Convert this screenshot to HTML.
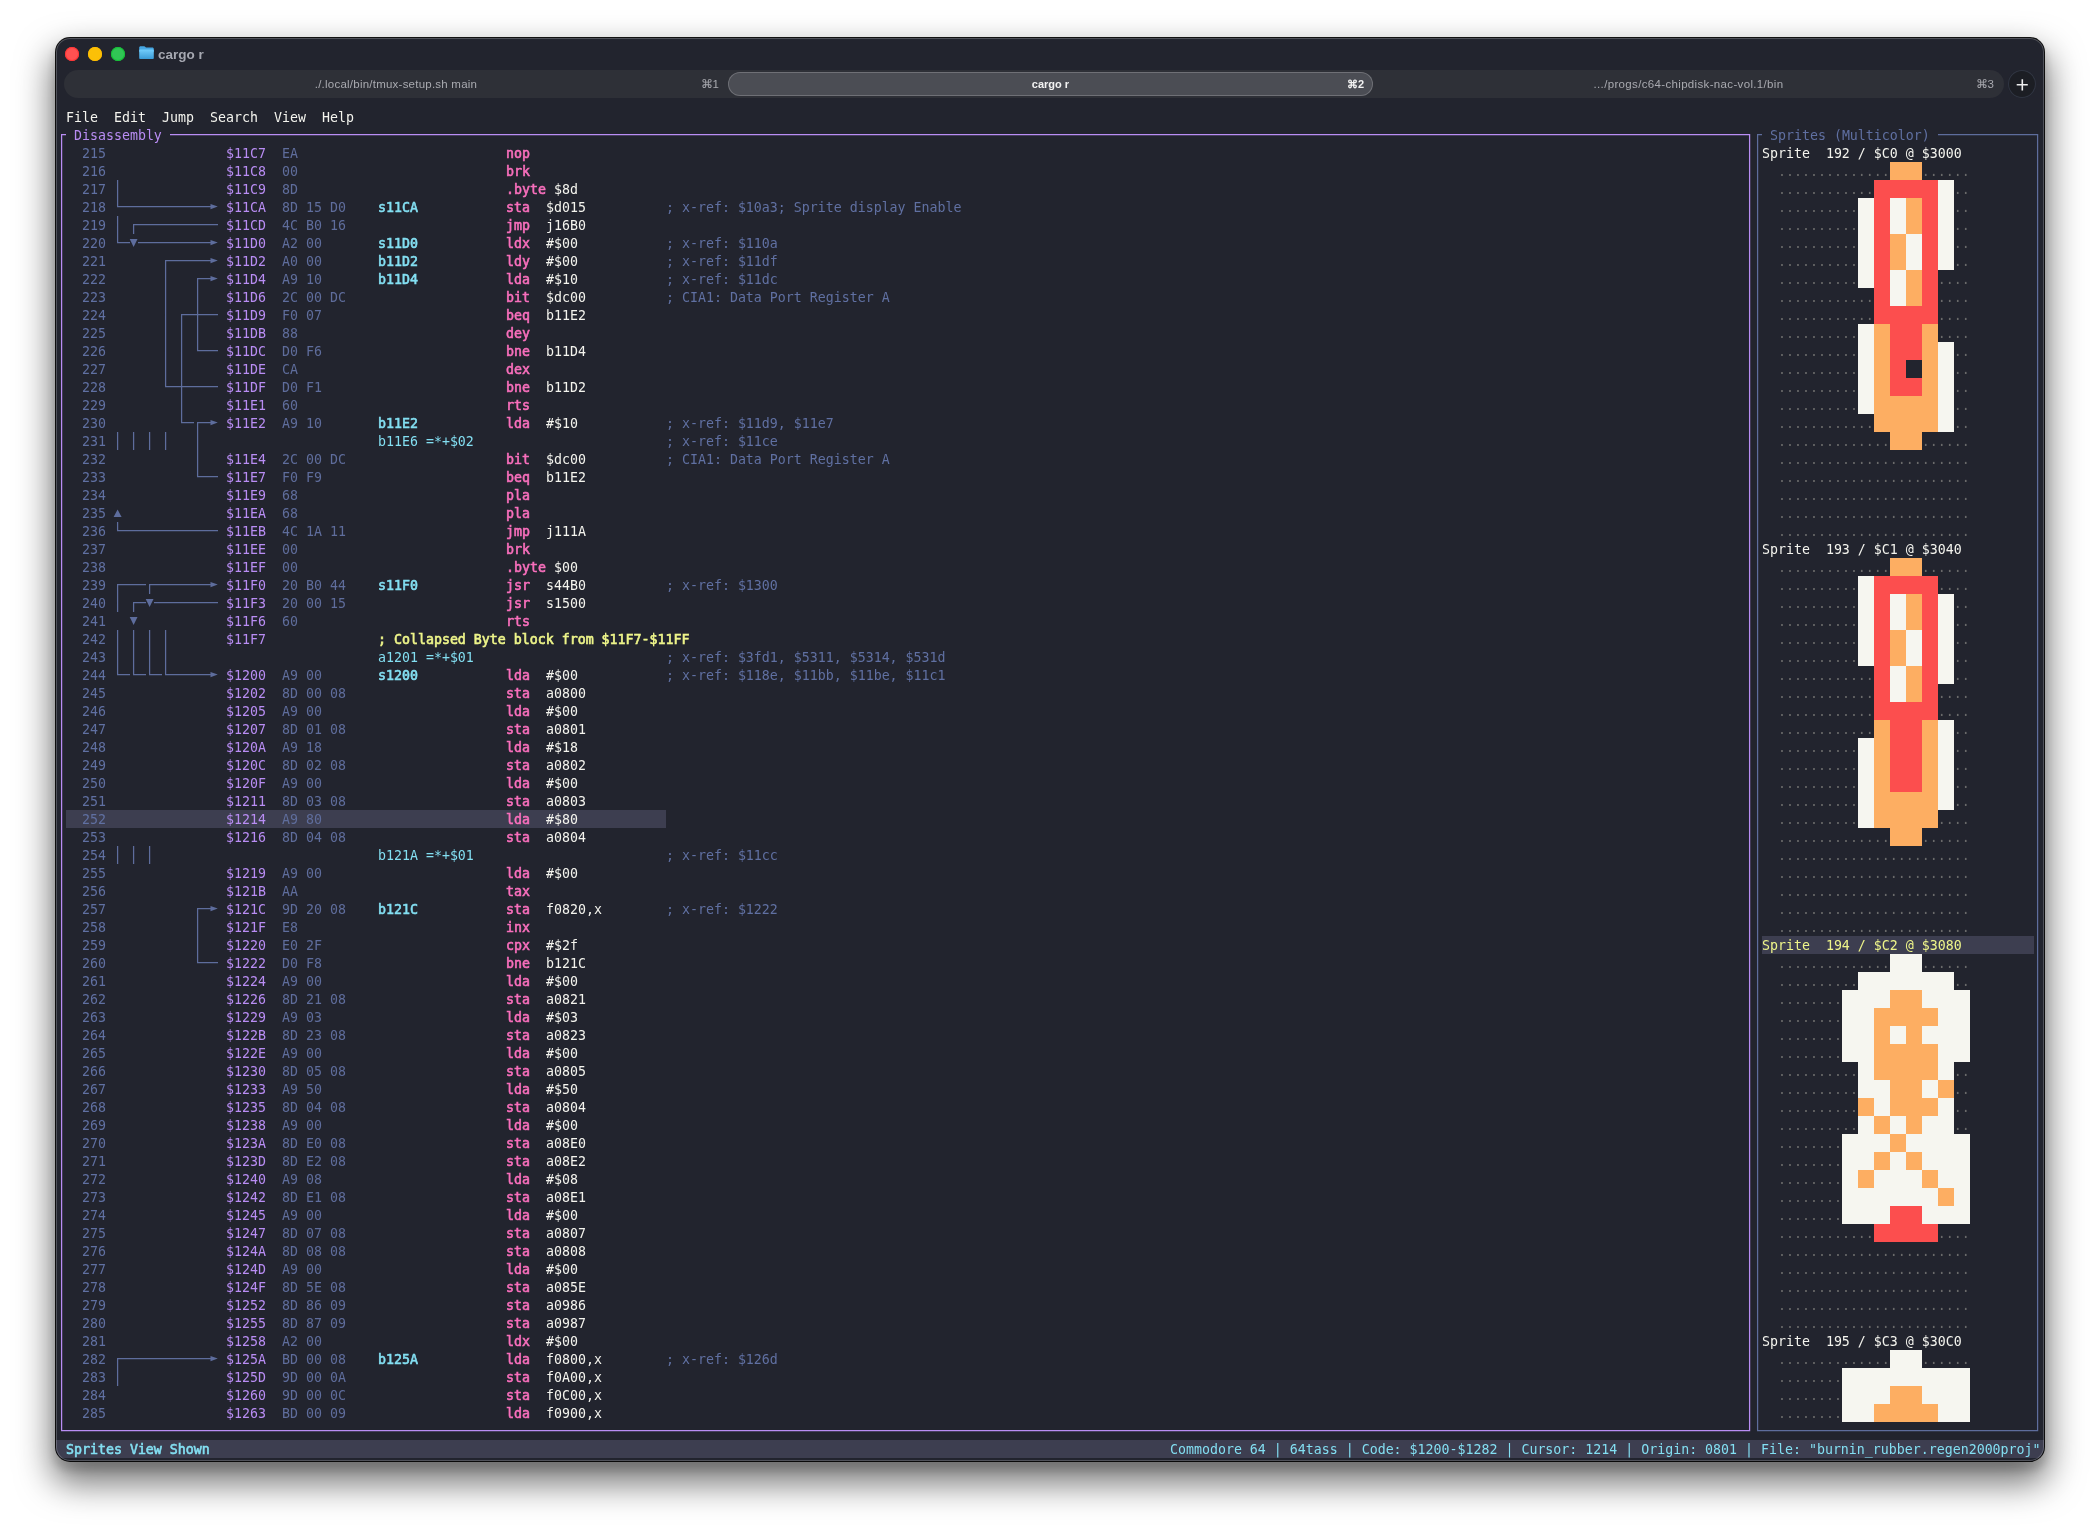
<!DOCTYPE html>
<html lang="en"><head><meta charset="utf-8"><title>cargo r</title>
<style>
html,body{margin:0;padding:0}
body{width:2100px;height:1535px;background:#fff;overflow:hidden;position:relative;font-family:"Liberation Sans",sans-serif}
.win{position:absolute;left:56px;top:38px;width:1988px;height:1423px;background:#22242e;border-radius:14px;
 box-shadow:0 0 0 1px rgba(0,0,0,.92),0 18px 35px 4px rgba(0,0,0,.55),0 7px 7px 3px rgba(0,0,0,.115);overflow:hidden}
.inner{position:absolute;inset:0;border-radius:14px;box-shadow:inset 0 0 0 1px rgba(255,255,255,.21);pointer-events:none;z-index:5}
.tl{position:absolute;top:9px;width:14px;height:14px;border-radius:50%}
.title{will-change:transform;position:absolute;left:102px;top:9px;height:16px;line-height:16px;font-size:13.5px;font-weight:bold;color:#a6a8b1;white-space:pre}
.tabs{will-change:transform;position:absolute;left:8px;top:32px;width:1939.5px;height:28px;border-radius:14px;background:#2e3037}
.tab{position:absolute;top:0;height:28px;line-height:28px;font-size:11.5px;letter-spacing:.2px;color:#a9aab0;white-space:pre}
.tab.act{top:2px;height:24px;line-height:24px;border-radius:12px;background:#4b4d54;box-shadow:inset 0 0 0 1px rgba(255,255,255,.2);color:#f2f2f2;font-weight:bold;font-size:11px;letter-spacing:0}
.tab .t{position:absolute;left:0;right:0;text-align:center}
.tab .k{position:absolute;right:9px;letter-spacing:0}
.plus{position:absolute;left:1952px;top:32px;width:28px;height:28px;border-radius:50%;background:#1c1e24;box-shadow:inset 0 0 0 1px #303542}
.sb{position:absolute;left:0;top:1402px;width:1988px;height:18px;background:#3d3e50}
.ov{position:absolute;left:0;top:0}
.term{position:absolute;left:0;top:0;will-change:transform;font-family:"DejaVu Sans Mono", "Liberation Mono", monospace;font-size:13.288px;color:#f4f4ee}
.r{position:absolute;left:0;height:18px;line-height:18px;white-space:pre}
.r span{position:absolute;top:1px}
.n{width:40px;text-align:right;color:#6070a2}
.fg{color:#f4f4ee}.pu{color:#b98df4}.by{color:#5f6d9c}.cy{color:#83dff2}.pk{color:#f86fbc}.co{color:#6070a2}.ye{color:#eef58a}.dt{color:#6a6a6a}
.b{-webkit-text-stroke:.6px currentColor}
</style></head>
<body>
<div class="win">

<div class="tl" style="left:9px;background:#ff5151;box-shadow:inset 0 0 0 1px #ff3434"></div>
<div class="tl" style="left:32px;background:#fbc007;box-shadow:inset 0 0 0 1px #ffbd00"></div>
<div class="tl" style="left:55px;background:#31c555;box-shadow:inset 0 0 0 1px #14c136"></div>
<svg style="position:absolute;left:82.6px;top:8.2px" width="15" height="13.4" viewBox="0 0 15 13.4"><defs><linearGradient id="fg" x1="0" y1="0" x2="0" y2="1"><stop offset="0" stop-color="#72cdfc"/><stop offset="1" stop-color="#3a9bd7"/></linearGradient></defs><path d="M.2 1.6C.2 .8 .8 .2 1.6 .2H5.1C5.7 .2 6 .5 6.4 .9L7 1.6H13.4C14.2 1.6 14.8 2.2 14.8 3V6H.2Z" fill="#46a6e2"/><path d="M.2 4.6C.2 4 .7 3.6 1.2 3.6H13.8C14.4 3.6 14.8 4 14.8 4.6V11.9C14.8 12.6 14.3 13.1 13.6 13.1H1.4C.7 13.1 .2 12.6 .2 11.9Z" fill="url(#fg)"/></svg>
<div class="title">cargo r</div>
<div class="tabs">
 <div class="tab" style="left:0;width:664px"><span class="t" style="letter-spacing:.23px">./.local/bin/tmux-setup.sh main</span><span class="k">⌘1</span></div>
 <div class="tab act" style="left:664px;width:645px"><span class="t">cargo r</span><span class="k">⌘2</span></div>
 <div class="tab" style="left:1309px;width:631px"><span class="t" style="letter-spacing:.34px">.../progs/c64-chipdisk-nac-vol.1/bin</span><span class="k" style="right:10px">⌘3</span></div>
</div>
<div class="plus"><svg width="28" height="28" viewBox="0 0 28 28"><path d="M14.3 9.2V20.4M8.7 14.7H19.8" stroke="#ededee" stroke-width="1.6" fill="none"/></svg></div>

<div class="sb"></div>
<svg class="ov" width="1988" height="1423" viewBox="0 0 1988 1423"><rect x="10" y="772" width="600" height="18" fill="#3d3e50"/><rect x="1834" y="124" width="32" height="18" fill="#fdae62"/><rect x="1818" y="142" width="64" height="18" fill="#fc4e4e"/><rect x="1882" y="142" width="16" height="18" fill="#f6f6f0"/><rect x="1802" y="160" width="16" height="18" fill="#f6f6f0"/><rect x="1818" y="160" width="16" height="18" fill="#fc4e4e"/><rect x="1834" y="160" width="16" height="18" fill="#f6f6f0"/><rect x="1850" y="160" width="16" height="18" fill="#fdae62"/><rect x="1866" y="160" width="16" height="18" fill="#fc4e4e"/><rect x="1882" y="160" width="16" height="18" fill="#f6f6f0"/><rect x="1802" y="178" width="16" height="18" fill="#f6f6f0"/><rect x="1818" y="178" width="16" height="18" fill="#fc4e4e"/><rect x="1834" y="178" width="16" height="18" fill="#f6f6f0"/><rect x="1850" y="178" width="16" height="18" fill="#fdae62"/><rect x="1866" y="178" width="16" height="18" fill="#fc4e4e"/><rect x="1882" y="178" width="16" height="18" fill="#f6f6f0"/><rect x="1802" y="196" width="16" height="18" fill="#f6f6f0"/><rect x="1818" y="196" width="16" height="18" fill="#fc4e4e"/><rect x="1834" y="196" width="16" height="18" fill="#fdae62"/><rect x="1850" y="196" width="16" height="18" fill="#f6f6f0"/><rect x="1866" y="196" width="16" height="18" fill="#fc4e4e"/><rect x="1882" y="196" width="16" height="18" fill="#f6f6f0"/><rect x="1802" y="214" width="16" height="18" fill="#f6f6f0"/><rect x="1818" y="214" width="16" height="18" fill="#fc4e4e"/><rect x="1834" y="214" width="16" height="18" fill="#fdae62"/><rect x="1850" y="214" width="16" height="18" fill="#f6f6f0"/><rect x="1866" y="214" width="16" height="18" fill="#fc4e4e"/><rect x="1882" y="214" width="16" height="18" fill="#f6f6f0"/><rect x="1802" y="232" width="16" height="18" fill="#f6f6f0"/><rect x="1818" y="232" width="16" height="18" fill="#fc4e4e"/><rect x="1834" y="232" width="16" height="18" fill="#f6f6f0"/><rect x="1850" y="232" width="16" height="18" fill="#fdae62"/><rect x="1866" y="232" width="16" height="18" fill="#fc4e4e"/><rect x="1818" y="250" width="16" height="18" fill="#fc4e4e"/><rect x="1834" y="250" width="16" height="18" fill="#f6f6f0"/><rect x="1850" y="250" width="16" height="18" fill="#fdae62"/><rect x="1866" y="250" width="16" height="18" fill="#fc4e4e"/><rect x="1818" y="268" width="64" height="18" fill="#fc4e4e"/><rect x="1802" y="286" width="16" height="18" fill="#f6f6f0"/><rect x="1818" y="286" width="16" height="18" fill="#fdae62"/><rect x="1834" y="286" width="32" height="18" fill="#fc4e4e"/><rect x="1866" y="286" width="16" height="18" fill="#fdae62"/><rect x="1802" y="304" width="16" height="18" fill="#f6f6f0"/><rect x="1818" y="304" width="16" height="18" fill="#fdae62"/><rect x="1834" y="304" width="32" height="18" fill="#fc4e4e"/><rect x="1866" y="304" width="16" height="18" fill="#fdae62"/><rect x="1882" y="304" width="16" height="18" fill="#f6f6f0"/><rect x="1802" y="322" width="16" height="18" fill="#f6f6f0"/><rect x="1818" y="322" width="16" height="18" fill="#fdae62"/><rect x="1834" y="322" width="16" height="18" fill="#fc4e4e"/><rect x="1866" y="322" width="16" height="18" fill="#fdae62"/><rect x="1882" y="322" width="16" height="18" fill="#f6f6f0"/><rect x="1802" y="340" width="16" height="18" fill="#f6f6f0"/><rect x="1818" y="340" width="16" height="18" fill="#fdae62"/><rect x="1834" y="340" width="32" height="18" fill="#fc4e4e"/><rect x="1866" y="340" width="16" height="18" fill="#fdae62"/><rect x="1882" y="340" width="16" height="18" fill="#f6f6f0"/><rect x="1802" y="358" width="16" height="18" fill="#f6f6f0"/><rect x="1818" y="358" width="64" height="18" fill="#fdae62"/><rect x="1882" y="358" width="16" height="18" fill="#f6f6f0"/><rect x="1818" y="376" width="64" height="18" fill="#fdae62"/><rect x="1882" y="376" width="16" height="18" fill="#f6f6f0"/><rect x="1834" y="394" width="32" height="18" fill="#fdae62"/><rect x="1834" y="520" width="32" height="18" fill="#fdae62"/><rect x="1802" y="538" width="16" height="18" fill="#f6f6f0"/><rect x="1818" y="538" width="64" height="18" fill="#fc4e4e"/><rect x="1802" y="556" width="16" height="18" fill="#f6f6f0"/><rect x="1818" y="556" width="16" height="18" fill="#fc4e4e"/><rect x="1834" y="556" width="16" height="18" fill="#f6f6f0"/><rect x="1850" y="556" width="16" height="18" fill="#fdae62"/><rect x="1866" y="556" width="16" height="18" fill="#fc4e4e"/><rect x="1882" y="556" width="16" height="18" fill="#f6f6f0"/><rect x="1802" y="574" width="16" height="18" fill="#f6f6f0"/><rect x="1818" y="574" width="16" height="18" fill="#fc4e4e"/><rect x="1834" y="574" width="16" height="18" fill="#f6f6f0"/><rect x="1850" y="574" width="16" height="18" fill="#fdae62"/><rect x="1866" y="574" width="16" height="18" fill="#fc4e4e"/><rect x="1882" y="574" width="16" height="18" fill="#f6f6f0"/><rect x="1802" y="592" width="16" height="18" fill="#f6f6f0"/><rect x="1818" y="592" width="16" height="18" fill="#fc4e4e"/><rect x="1834" y="592" width="16" height="18" fill="#fdae62"/><rect x="1850" y="592" width="16" height="18" fill="#f6f6f0"/><rect x="1866" y="592" width="16" height="18" fill="#fc4e4e"/><rect x="1882" y="592" width="16" height="18" fill="#f6f6f0"/><rect x="1802" y="610" width="16" height="18" fill="#f6f6f0"/><rect x="1818" y="610" width="16" height="18" fill="#fc4e4e"/><rect x="1834" y="610" width="16" height="18" fill="#fdae62"/><rect x="1850" y="610" width="16" height="18" fill="#f6f6f0"/><rect x="1866" y="610" width="16" height="18" fill="#fc4e4e"/><rect x="1882" y="610" width="16" height="18" fill="#f6f6f0"/><rect x="1818" y="628" width="16" height="18" fill="#fc4e4e"/><rect x="1834" y="628" width="16" height="18" fill="#f6f6f0"/><rect x="1850" y="628" width="16" height="18" fill="#fdae62"/><rect x="1866" y="628" width="16" height="18" fill="#fc4e4e"/><rect x="1882" y="628" width="16" height="18" fill="#f6f6f0"/><rect x="1818" y="646" width="16" height="18" fill="#fc4e4e"/><rect x="1834" y="646" width="16" height="18" fill="#f6f6f0"/><rect x="1850" y="646" width="16" height="18" fill="#fdae62"/><rect x="1866" y="646" width="16" height="18" fill="#fc4e4e"/><rect x="1818" y="664" width="64" height="18" fill="#fc4e4e"/><rect x="1818" y="682" width="16" height="18" fill="#fdae62"/><rect x="1834" y="682" width="32" height="18" fill="#fc4e4e"/><rect x="1866" y="682" width="16" height="18" fill="#fdae62"/><rect x="1882" y="682" width="16" height="18" fill="#f6f6f0"/><rect x="1802" y="700" width="16" height="18" fill="#f6f6f0"/><rect x="1818" y="700" width="16" height="18" fill="#fdae62"/><rect x="1834" y="700" width="32" height="18" fill="#fc4e4e"/><rect x="1866" y="700" width="16" height="18" fill="#fdae62"/><rect x="1882" y="700" width="16" height="18" fill="#f6f6f0"/><rect x="1802" y="718" width="16" height="18" fill="#f6f6f0"/><rect x="1818" y="718" width="16" height="18" fill="#fdae62"/><rect x="1834" y="718" width="32" height="18" fill="#fc4e4e"/><rect x="1866" y="718" width="16" height="18" fill="#fdae62"/><rect x="1882" y="718" width="16" height="18" fill="#f6f6f0"/><rect x="1802" y="736" width="16" height="18" fill="#f6f6f0"/><rect x="1818" y="736" width="16" height="18" fill="#fdae62"/><rect x="1834" y="736" width="32" height="18" fill="#fc4e4e"/><rect x="1866" y="736" width="16" height="18" fill="#fdae62"/><rect x="1882" y="736" width="16" height="18" fill="#f6f6f0"/><rect x="1802" y="754" width="16" height="18" fill="#f6f6f0"/><rect x="1818" y="754" width="64" height="18" fill="#fdae62"/><rect x="1882" y="754" width="16" height="18" fill="#f6f6f0"/><rect x="1802" y="772" width="16" height="18" fill="#f6f6f0"/><rect x="1818" y="772" width="64" height="18" fill="#fdae62"/><rect x="1834" y="790" width="32" height="18" fill="#fdae62"/><rect x="1706" y="898" width="272" height="18" fill="#3d3e50"/><rect x="1834" y="916" width="32" height="18" fill="#f6f6f0"/><rect x="1802" y="934" width="96" height="18" fill="#f6f6f0"/><rect x="1786" y="952" width="48" height="18" fill="#f6f6f0"/><rect x="1834" y="952" width="32" height="18" fill="#fdae62"/><rect x="1866" y="952" width="48" height="18" fill="#f6f6f0"/><rect x="1786" y="970" width="32" height="18" fill="#f6f6f0"/><rect x="1818" y="970" width="64" height="18" fill="#fdae62"/><rect x="1882" y="970" width="32" height="18" fill="#f6f6f0"/><rect x="1786" y="988" width="32" height="18" fill="#f6f6f0"/><rect x="1818" y="988" width="16" height="18" fill="#fdae62"/><rect x="1834" y="988" width="16" height="18" fill="#f6f6f0"/><rect x="1850" y="988" width="16" height="18" fill="#fdae62"/><rect x="1866" y="988" width="48" height="18" fill="#f6f6f0"/><rect x="1786" y="1006" width="32" height="18" fill="#f6f6f0"/><rect x="1818" y="1006" width="64" height="18" fill="#fdae62"/><rect x="1882" y="1006" width="32" height="18" fill="#f6f6f0"/><rect x="1802" y="1024" width="16" height="18" fill="#f6f6f0"/><rect x="1818" y="1024" width="64" height="18" fill="#fdae62"/><rect x="1882" y="1024" width="16" height="18" fill="#f6f6f0"/><rect x="1802" y="1042" width="32" height="18" fill="#f6f6f0"/><rect x="1834" y="1042" width="32" height="18" fill="#fdae62"/><rect x="1866" y="1042" width="16" height="18" fill="#f6f6f0"/><rect x="1882" y="1042" width="16" height="18" fill="#fdae62"/><rect x="1802" y="1060" width="16" height="18" fill="#fdae62"/><rect x="1818" y="1060" width="16" height="18" fill="#f6f6f0"/><rect x="1834" y="1060" width="48" height="18" fill="#fdae62"/><rect x="1882" y="1060" width="16" height="18" fill="#f6f6f0"/><rect x="1802" y="1078" width="16" height="18" fill="#f6f6f0"/><rect x="1818" y="1078" width="16" height="18" fill="#fdae62"/><rect x="1834" y="1078" width="16" height="18" fill="#f6f6f0"/><rect x="1850" y="1078" width="16" height="18" fill="#fdae62"/><rect x="1866" y="1078" width="32" height="18" fill="#f6f6f0"/><rect x="1786" y="1096" width="48" height="18" fill="#f6f6f0"/><rect x="1834" y="1096" width="16" height="18" fill="#fdae62"/><rect x="1850" y="1096" width="64" height="18" fill="#f6f6f0"/><rect x="1786" y="1114" width="32" height="18" fill="#f6f6f0"/><rect x="1818" y="1114" width="16" height="18" fill="#fdae62"/><rect x="1834" y="1114" width="16" height="18" fill="#f6f6f0"/><rect x="1850" y="1114" width="16" height="18" fill="#fdae62"/><rect x="1866" y="1114" width="48" height="18" fill="#f6f6f0"/><rect x="1786" y="1132" width="16" height="18" fill="#f6f6f0"/><rect x="1802" y="1132" width="16" height="18" fill="#fdae62"/><rect x="1818" y="1132" width="48" height="18" fill="#f6f6f0"/><rect x="1866" y="1132" width="16" height="18" fill="#fdae62"/><rect x="1882" y="1132" width="32" height="18" fill="#f6f6f0"/><rect x="1786" y="1150" width="96" height="18" fill="#f6f6f0"/><rect x="1882" y="1150" width="16" height="18" fill="#fdae62"/><rect x="1898" y="1150" width="16" height="18" fill="#f6f6f0"/><rect x="1786" y="1168" width="48" height="18" fill="#f6f6f0"/><rect x="1834" y="1168" width="32" height="18" fill="#fc4e4e"/><rect x="1866" y="1168" width="48" height="18" fill="#f6f6f0"/><rect x="1818" y="1186" width="64" height="18" fill="#fc4e4e"/><rect x="1834" y="1312" width="32" height="18" fill="#f6f6f0"/><rect x="1786" y="1330" width="128" height="18" fill="#f6f6f0"/><rect x="1786" y="1348" width="48" height="18" fill="#f6f6f0"/><rect x="1834" y="1348" width="32" height="18" fill="#fdae62"/><rect x="1866" y="1348" width="48" height="18" fill="#f6f6f0"/><rect x="1786" y="1366" width="32" height="18" fill="#f6f6f0"/><rect x="1818" y="1366" width="64" height="18" fill="#fdae62"/><rect x="1882" y="1366" width="32" height="18" fill="#f6f6f0"/><path d="M5.6 106V96.6H10M114 96.6H1690M1690 96.6H1693.6V106M5.6 106V1384M1693.6 106V1384M5.6 1384V1392.6H10M1690 1392.6H1693.6V1384M10 1392.6H1690" fill="none" stroke="#b98df4" stroke-width="1.25"/><path d="M1701.6 106V96.6H1706M1882 96.6H1978M1978 96.6H1981.6V106M1701.6 106V1384M1981.6 106V1384M1701.6 1384V1392.6H1706M1978 1392.6H1981.6V1384M1706 1392.6H1978" fill="none" stroke="#5e6d9d" stroke-width="1.25"/><path d="M61.6 142V160M61.6 160V168.6H66M66 168.6H74M74 168.6H82M82 168.6H90M90 168.6H98M98 168.6H106M106 168.6H114M114 168.6H122M122 168.6H130M130 168.6H138M138 168.6H146M146 168.6H154M154 168.6H157M61.6 178V196M77.6 196V186.6H82M82 186.6H90M90 186.6H98M98 186.6H106M106 186.6H114M114 186.6H122M122 186.6H130M130 186.6H138M138 186.6H146M146 186.6H154M154 186.6H162M61.6 196V204.6H66M66 204.6H74M82 204.6H90M90 204.6H98M98 204.6H106M106 204.6H114M114 204.6H122M122 204.6H130M130 204.6H138M138 204.6H146M146 204.6H154M154 204.6H157M109.6 232V222.6H114M114 222.6H122M122 222.6H130M130 222.6H138M138 222.6H146M146 222.6H154M154 222.6H157M109.6 232V250M141.6 250V240.6H146M146 240.6H154M154 240.6H157M109.6 250V268M141.6 250V268M109.6 268V286M125.6 286V276.6H130M130 276.6H138M141.6 268V286M138 276.6H146M146 276.6H154M154 276.6H162M109.6 286V304M125.6 286V304M141.6 286V304M109.6 304V322M125.6 304V322M141.6 304V312.6H146M146 312.6H154M154 312.6H162M109.6 322V340M125.6 322V340M109.6 340V348.6H114M114 348.6H122M125.6 340V358M122 348.6H130M130 348.6H138M138 348.6H146M146 348.6H154M154 348.6H162M125.6 358V376M125.6 376V384.6H130M130 384.6H138M141.6 394V384.6H146M146 384.6H154M154 384.6H157M61.6 394V412M77.6 394V412M93.6 394V412M109.6 394V412M141.6 394V412M141.6 412V430M141.6 430V438.6H146M146 438.6H154M154 438.6H162M61.6 484V492.6H66M66 492.6H74M74 492.6H82M82 492.6H90M90 492.6H98M98 492.6H106M106 492.6H114M114 492.6H122M122 492.6H130M130 492.6H138M138 492.6H146M146 492.6H154M154 492.6H162M61.6 556V546.6H66M66 546.6H74M74 546.6H82M82 546.6H90M93.6 556V546.6H98M98 546.6H106M106 546.6H114M114 546.6H122M122 546.6H130M130 546.6H138M138 546.6H146M146 546.6H154M154 546.6H157M61.6 556V574M77.6 574V564.6H82M82 564.6H90M98 564.6H106M106 564.6H114M114 564.6H122M122 564.6H130M130 564.6H138M138 564.6H146M146 564.6H154M154 564.6H162M61.6 592V610M77.6 592V610M93.6 592V610M109.6 592V610M61.6 610V628M77.6 610V628M93.6 610V628M109.6 610V628M61.6 628V636.6H66M66 636.6H74M77.6 628V636.6H82M82 636.6H90M93.6 628V636.6H98M98 636.6H106M109.6 628V636.6H114M114 636.6H122M122 636.6H130M130 636.6H138M138 636.6H146M146 636.6H154M154 636.6H157M61.6 808V826M77.6 808V826M93.6 808V826M141.6 880V870.6H146M146 870.6H154M154 870.6H157M141.6 880V898M141.6 898V916M141.6 916V924.6H146M146 924.6H154M154 924.6H162M61.6 1330V1320.6H66M66 1320.6H74M74 1320.6H82M82 1320.6H90M90 1320.6H98M98 1320.6H106M106 1320.6H114M114 1320.6H122M122 1320.6H130M130 1320.6H138M138 1320.6H146M146 1320.6H154M154 1320.6H157M61.6 1330V1348" fill="none" stroke="#5e6d9d" stroke-width="1.25"/><path d="M154.5 166.0L161.8 168.6L154.5 171.2ZM73.69999999999999 201H81.5L77.6 209ZM154.5 202.0L161.8 204.6L154.5 207.2ZM154.5 220.0L161.8 222.6L154.5 225.2ZM154.5 238.0L161.8 240.6L154.5 243.2ZM154.5 382.0L161.8 384.6L154.5 387.20000000000005ZM57.6 479H65.6L61.6 471.5ZM154.5 544.0L161.8 546.6L154.5 549.2ZM89.69999999999999 561H97.5L93.6 569ZM73.69999999999999 579H81.5L77.6 587ZM154.5 634.0L161.8 636.6L154.5 639.2ZM154.5 868.0L161.8 870.6L154.5 873.2ZM154.5 1318.0L161.8 1320.6L154.5 1323.1999999999998Z" fill="#5e6d9d"/></svg>
<div class="term">
<div class="r" style="top:70px"><span class="fg" style="left:10px">File</span><span class="fg" style="left:58px">Edit</span><span class="fg" style="left:106px">Jump</span><span class="fg" style="left:154px">Search</span><span class="fg" style="left:218px">View</span><span class="fg" style="left:266px">Help</span></div>
<div class="r" style="top:88px"><span class="pu" style="left:18px">Disassembly</span><span class="co" style="left:1714px">Sprites (Multicolor)</span></div>
<div class="r" style="top:106px"><span class="n" style="left:10px">215</span><span class="pu" style="left:170px">$11C7</span><span class="by" style="left:226px">EA</span><span class="pk b" style="left:450px">nop</span></div>
<div class="r" style="top:124px"><span class="n" style="left:10px">216</span><span class="pu" style="left:170px">$11C8</span><span class="by" style="left:226px">00</span><span class="pk b" style="left:450px">brk</span></div>
<div class="r" style="top:142px"><span class="n" style="left:10px">217</span><span class="pu" style="left:170px">$11C9</span><span class="by" style="left:226px">8D</span><span class="pk b" style="left:450px">.byte</span><span class="fg" style="left:498px">$8d</span></div>
<div class="r" style="top:160px"><span class="n" style="left:10px">218</span><span class="pu" style="left:170px">$11CA</span><span class="by" style="left:226px">8D 15 D0</span><span class="cy b" style="left:322px">s11CA</span><span class="pk b" style="left:450px">sta</span><span class="fg" style="left:490px">$d015</span><span class="co" style="left:610px">; x-ref: $10a3; Sprite display Enable</span></div>
<div class="r" style="top:178px"><span class="n" style="left:10px">219</span><span class="pu" style="left:170px">$11CD</span><span class="by" style="left:226px">4C B0 16</span><span class="pk b" style="left:450px">jmp</span><span class="fg" style="left:490px">j16B0</span></div>
<div class="r" style="top:196px"><span class="n" style="left:10px">220</span><span class="pu" style="left:170px">$11D0</span><span class="by" style="left:226px">A2 00</span><span class="cy b" style="left:322px">s11D0</span><span class="pk b" style="left:450px">ldx</span><span class="fg" style="left:490px">#$00</span><span class="co" style="left:610px">; x-ref: $110a</span></div>
<div class="r" style="top:214px"><span class="n" style="left:10px">221</span><span class="pu" style="left:170px">$11D2</span><span class="by" style="left:226px">A0 00</span><span class="cy b" style="left:322px">b11D2</span><span class="pk b" style="left:450px">ldy</span><span class="fg" style="left:490px">#$00</span><span class="co" style="left:610px">; x-ref: $11df</span></div>
<div class="r" style="top:232px"><span class="n" style="left:10px">222</span><span class="pu" style="left:170px">$11D4</span><span class="by" style="left:226px">A9 10</span><span class="cy b" style="left:322px">b11D4</span><span class="pk b" style="left:450px">lda</span><span class="fg" style="left:490px">#$10</span><span class="co" style="left:610px">; x-ref: $11dc</span></div>
<div class="r" style="top:250px"><span class="n" style="left:10px">223</span><span class="pu" style="left:170px">$11D6</span><span class="by" style="left:226px">2C 00 DC</span><span class="pk b" style="left:450px">bit</span><span class="fg" style="left:490px">$dc00</span><span class="co" style="left:610px">; CIA1: Data Port Register A</span></div>
<div class="r" style="top:268px"><span class="n" style="left:10px">224</span><span class="pu" style="left:170px">$11D9</span><span class="by" style="left:226px">F0 07</span><span class="pk b" style="left:450px">beq</span><span class="fg" style="left:490px">b11E2</span></div>
<div class="r" style="top:286px"><span class="n" style="left:10px">225</span><span class="pu" style="left:170px">$11DB</span><span class="by" style="left:226px">88</span><span class="pk b" style="left:450px">dey</span></div>
<div class="r" style="top:304px"><span class="n" style="left:10px">226</span><span class="pu" style="left:170px">$11DC</span><span class="by" style="left:226px">D0 F6</span><span class="pk b" style="left:450px">bne</span><span class="fg" style="left:490px">b11D4</span></div>
<div class="r" style="top:322px"><span class="n" style="left:10px">227</span><span class="pu" style="left:170px">$11DE</span><span class="by" style="left:226px">CA</span><span class="pk b" style="left:450px">dex</span></div>
<div class="r" style="top:340px"><span class="n" style="left:10px">228</span><span class="pu" style="left:170px">$11DF</span><span class="by" style="left:226px">D0 F1</span><span class="pk b" style="left:450px">bne</span><span class="fg" style="left:490px">b11D2</span></div>
<div class="r" style="top:358px"><span class="n" style="left:10px">229</span><span class="pu" style="left:170px">$11E1</span><span class="by" style="left:226px">60</span><span class="pk b" style="left:450px">rts</span></div>
<div class="r" style="top:376px"><span class="n" style="left:10px">230</span><span class="pu" style="left:170px">$11E2</span><span class="by" style="left:226px">A9 10</span><span class="cy b" style="left:322px">b11E2</span><span class="pk b" style="left:450px">lda</span><span class="fg" style="left:490px">#$10</span><span class="co" style="left:610px">; x-ref: $11d9, $11e7</span></div>
<div class="r" style="top:394px"><span class="n" style="left:10px">231</span><span class="cy" style="left:322px">b11E6 =*+$02</span><span class="co" style="left:610px">; x-ref: $11ce</span></div>
<div class="r" style="top:412px"><span class="n" style="left:10px">232</span><span class="pu" style="left:170px">$11E4</span><span class="by" style="left:226px">2C 00 DC</span><span class="pk b" style="left:450px">bit</span><span class="fg" style="left:490px">$dc00</span><span class="co" style="left:610px">; CIA1: Data Port Register A</span></div>
<div class="r" style="top:430px"><span class="n" style="left:10px">233</span><span class="pu" style="left:170px">$11E7</span><span class="by" style="left:226px">F0 F9</span><span class="pk b" style="left:450px">beq</span><span class="fg" style="left:490px">b11E2</span></div>
<div class="r" style="top:448px"><span class="n" style="left:10px">234</span><span class="pu" style="left:170px">$11E9</span><span class="by" style="left:226px">68</span><span class="pk b" style="left:450px">pla</span></div>
<div class="r" style="top:466px"><span class="n" style="left:10px">235</span><span class="pu" style="left:170px">$11EA</span><span class="by" style="left:226px">68</span><span class="pk b" style="left:450px">pla</span></div>
<div class="r" style="top:484px"><span class="n" style="left:10px">236</span><span class="pu" style="left:170px">$11EB</span><span class="by" style="left:226px">4C 1A 11</span><span class="pk b" style="left:450px">jmp</span><span class="fg" style="left:490px">j111A</span></div>
<div class="r" style="top:502px"><span class="n" style="left:10px">237</span><span class="pu" style="left:170px">$11EE</span><span class="by" style="left:226px">00</span><span class="pk b" style="left:450px">brk</span></div>
<div class="r" style="top:520px"><span class="n" style="left:10px">238</span><span class="pu" style="left:170px">$11EF</span><span class="by" style="left:226px">00</span><span class="pk b" style="left:450px">.byte</span><span class="fg" style="left:498px">$00</span></div>
<div class="r" style="top:538px"><span class="n" style="left:10px">239</span><span class="pu" style="left:170px">$11F0</span><span class="by" style="left:226px">20 B0 44</span><span class="cy b" style="left:322px">s11F0</span><span class="pk b" style="left:450px">jsr</span><span class="fg" style="left:490px">s44B0</span><span class="co" style="left:610px">; x-ref: $1300</span></div>
<div class="r" style="top:556px"><span class="n" style="left:10px">240</span><span class="pu" style="left:170px">$11F3</span><span class="by" style="left:226px">20 00 15</span><span class="pk b" style="left:450px">jsr</span><span class="fg" style="left:490px">s1500</span></div>
<div class="r" style="top:574px"><span class="n" style="left:10px">241</span><span class="pu" style="left:170px">$11F6</span><span class="by" style="left:226px">60</span><span class="pk b" style="left:450px">rts</span></div>
<div class="r" style="top:592px"><span class="n" style="left:10px">242</span><span class="pu" style="left:170px">$11F7</span><span class="ye b" style="left:322px">; Collapsed Byte block from $11F7-$11FF</span></div>
<div class="r" style="top:610px"><span class="n" style="left:10px">243</span><span class="cy" style="left:322px">a1201 =*+$01</span><span class="co" style="left:610px">; x-ref: $3fd1, $5311, $5314, $531d</span></div>
<div class="r" style="top:628px"><span class="n" style="left:10px">244</span><span class="pu" style="left:170px">$1200</span><span class="by" style="left:226px">A9 00</span><span class="cy b" style="left:322px">s1200</span><span class="pk b" style="left:450px">lda</span><span class="fg" style="left:490px">#$00</span><span class="co" style="left:610px">; x-ref: $118e, $11bb, $11be, $11c1</span></div>
<div class="r" style="top:646px"><span class="n" style="left:10px">245</span><span class="pu" style="left:170px">$1202</span><span class="by" style="left:226px">8D 00 08</span><span class="pk b" style="left:450px">sta</span><span class="fg" style="left:490px">a0800</span></div>
<div class="r" style="top:664px"><span class="n" style="left:10px">246</span><span class="pu" style="left:170px">$1205</span><span class="by" style="left:226px">A9 00</span><span class="pk b" style="left:450px">lda</span><span class="fg" style="left:490px">#$00</span></div>
<div class="r" style="top:682px"><span class="n" style="left:10px">247</span><span class="pu" style="left:170px">$1207</span><span class="by" style="left:226px">8D 01 08</span><span class="pk b" style="left:450px">sta</span><span class="fg" style="left:490px">a0801</span></div>
<div class="r" style="top:700px"><span class="n" style="left:10px">248</span><span class="pu" style="left:170px">$120A</span><span class="by" style="left:226px">A9 18</span><span class="pk b" style="left:450px">lda</span><span class="fg" style="left:490px">#$18</span></div>
<div class="r" style="top:718px"><span class="n" style="left:10px">249</span><span class="pu" style="left:170px">$120C</span><span class="by" style="left:226px">8D 02 08</span><span class="pk b" style="left:450px">sta</span><span class="fg" style="left:490px">a0802</span></div>
<div class="r" style="top:736px"><span class="n" style="left:10px">250</span><span class="pu" style="left:170px">$120F</span><span class="by" style="left:226px">A9 00</span><span class="pk b" style="left:450px">lda</span><span class="fg" style="left:490px">#$00</span></div>
<div class="r" style="top:754px"><span class="n" style="left:10px">251</span><span class="pu" style="left:170px">$1211</span><span class="by" style="left:226px">8D 03 08</span><span class="pk b" style="left:450px">sta</span><span class="fg" style="left:490px">a0803</span></div>
<div class="r" style="top:772px"><span class="n" style="left:10px">252</span><span class="pu" style="left:170px">$1214</span><span class="by" style="left:226px">A9 80</span><span class="pk b" style="left:450px">lda</span><span class="fg" style="left:490px">#$80</span></div>
<div class="r" style="top:790px"><span class="n" style="left:10px">253</span><span class="pu" style="left:170px">$1216</span><span class="by" style="left:226px">8D 04 08</span><span class="pk b" style="left:450px">sta</span><span class="fg" style="left:490px">a0804</span></div>
<div class="r" style="top:808px"><span class="n" style="left:10px">254</span><span class="cy" style="left:322px">b121A =*+$01</span><span class="co" style="left:610px">; x-ref: $11cc</span></div>
<div class="r" style="top:826px"><span class="n" style="left:10px">255</span><span class="pu" style="left:170px">$1219</span><span class="by" style="left:226px">A9 00</span><span class="pk b" style="left:450px">lda</span><span class="fg" style="left:490px">#$00</span></div>
<div class="r" style="top:844px"><span class="n" style="left:10px">256</span><span class="pu" style="left:170px">$121B</span><span class="by" style="left:226px">AA</span><span class="pk b" style="left:450px">tax</span></div>
<div class="r" style="top:862px"><span class="n" style="left:10px">257</span><span class="pu" style="left:170px">$121C</span><span class="by" style="left:226px">9D 20 08</span><span class="cy b" style="left:322px">b121C</span><span class="pk b" style="left:450px">sta</span><span class="fg" style="left:490px">f0820,x</span><span class="co" style="left:610px">; x-ref: $1222</span></div>
<div class="r" style="top:880px"><span class="n" style="left:10px">258</span><span class="pu" style="left:170px">$121F</span><span class="by" style="left:226px">E8</span><span class="pk b" style="left:450px">inx</span></div>
<div class="r" style="top:898px"><span class="n" style="left:10px">259</span><span class="pu" style="left:170px">$1220</span><span class="by" style="left:226px">E0 2F</span><span class="pk b" style="left:450px">cpx</span><span class="fg" style="left:490px">#$2f</span></div>
<div class="r" style="top:916px"><span class="n" style="left:10px">260</span><span class="pu" style="left:170px">$1222</span><span class="by" style="left:226px">D0 F8</span><span class="pk b" style="left:450px">bne</span><span class="fg" style="left:490px">b121C</span></div>
<div class="r" style="top:934px"><span class="n" style="left:10px">261</span><span class="pu" style="left:170px">$1224</span><span class="by" style="left:226px">A9 00</span><span class="pk b" style="left:450px">lda</span><span class="fg" style="left:490px">#$00</span></div>
<div class="r" style="top:952px"><span class="n" style="left:10px">262</span><span class="pu" style="left:170px">$1226</span><span class="by" style="left:226px">8D 21 08</span><span class="pk b" style="left:450px">sta</span><span class="fg" style="left:490px">a0821</span></div>
<div class="r" style="top:970px"><span class="n" style="left:10px">263</span><span class="pu" style="left:170px">$1229</span><span class="by" style="left:226px">A9 03</span><span class="pk b" style="left:450px">lda</span><span class="fg" style="left:490px">#$03</span></div>
<div class="r" style="top:988px"><span class="n" style="left:10px">264</span><span class="pu" style="left:170px">$122B</span><span class="by" style="left:226px">8D 23 08</span><span class="pk b" style="left:450px">sta</span><span class="fg" style="left:490px">a0823</span></div>
<div class="r" style="top:1006px"><span class="n" style="left:10px">265</span><span class="pu" style="left:170px">$122E</span><span class="by" style="left:226px">A9 00</span><span class="pk b" style="left:450px">lda</span><span class="fg" style="left:490px">#$00</span></div>
<div class="r" style="top:1024px"><span class="n" style="left:10px">266</span><span class="pu" style="left:170px">$1230</span><span class="by" style="left:226px">8D 05 08</span><span class="pk b" style="left:450px">sta</span><span class="fg" style="left:490px">a0805</span></div>
<div class="r" style="top:1042px"><span class="n" style="left:10px">267</span><span class="pu" style="left:170px">$1233</span><span class="by" style="left:226px">A9 50</span><span class="pk b" style="left:450px">lda</span><span class="fg" style="left:490px">#$50</span></div>
<div class="r" style="top:1060px"><span class="n" style="left:10px">268</span><span class="pu" style="left:170px">$1235</span><span class="by" style="left:226px">8D 04 08</span><span class="pk b" style="left:450px">sta</span><span class="fg" style="left:490px">a0804</span></div>
<div class="r" style="top:1078px"><span class="n" style="left:10px">269</span><span class="pu" style="left:170px">$1238</span><span class="by" style="left:226px">A9 00</span><span class="pk b" style="left:450px">lda</span><span class="fg" style="left:490px">#$00</span></div>
<div class="r" style="top:1096px"><span class="n" style="left:10px">270</span><span class="pu" style="left:170px">$123A</span><span class="by" style="left:226px">8D E0 08</span><span class="pk b" style="left:450px">sta</span><span class="fg" style="left:490px">a08E0</span></div>
<div class="r" style="top:1114px"><span class="n" style="left:10px">271</span><span class="pu" style="left:170px">$123D</span><span class="by" style="left:226px">8D E2 08</span><span class="pk b" style="left:450px">sta</span><span class="fg" style="left:490px">a08E2</span></div>
<div class="r" style="top:1132px"><span class="n" style="left:10px">272</span><span class="pu" style="left:170px">$1240</span><span class="by" style="left:226px">A9 08</span><span class="pk b" style="left:450px">lda</span><span class="fg" style="left:490px">#$08</span></div>
<div class="r" style="top:1150px"><span class="n" style="left:10px">273</span><span class="pu" style="left:170px">$1242</span><span class="by" style="left:226px">8D E1 08</span><span class="pk b" style="left:450px">sta</span><span class="fg" style="left:490px">a08E1</span></div>
<div class="r" style="top:1168px"><span class="n" style="left:10px">274</span><span class="pu" style="left:170px">$1245</span><span class="by" style="left:226px">A9 00</span><span class="pk b" style="left:450px">lda</span><span class="fg" style="left:490px">#$00</span></div>
<div class="r" style="top:1186px"><span class="n" style="left:10px">275</span><span class="pu" style="left:170px">$1247</span><span class="by" style="left:226px">8D 07 08</span><span class="pk b" style="left:450px">sta</span><span class="fg" style="left:490px">a0807</span></div>
<div class="r" style="top:1204px"><span class="n" style="left:10px">276</span><span class="pu" style="left:170px">$124A</span><span class="by" style="left:226px">8D 08 08</span><span class="pk b" style="left:450px">sta</span><span class="fg" style="left:490px">a0808</span></div>
<div class="r" style="top:1222px"><span class="n" style="left:10px">277</span><span class="pu" style="left:170px">$124D</span><span class="by" style="left:226px">A9 00</span><span class="pk b" style="left:450px">lda</span><span class="fg" style="left:490px">#$00</span></div>
<div class="r" style="top:1240px"><span class="n" style="left:10px">278</span><span class="pu" style="left:170px">$124F</span><span class="by" style="left:226px">8D 5E 08</span><span class="pk b" style="left:450px">sta</span><span class="fg" style="left:490px">a085E</span></div>
<div class="r" style="top:1258px"><span class="n" style="left:10px">279</span><span class="pu" style="left:170px">$1252</span><span class="by" style="left:226px">8D 86 09</span><span class="pk b" style="left:450px">sta</span><span class="fg" style="left:490px">a0986</span></div>
<div class="r" style="top:1276px"><span class="n" style="left:10px">280</span><span class="pu" style="left:170px">$1255</span><span class="by" style="left:226px">8D 87 09</span><span class="pk b" style="left:450px">sta</span><span class="fg" style="left:490px">a0987</span></div>
<div class="r" style="top:1294px"><span class="n" style="left:10px">281</span><span class="pu" style="left:170px">$1258</span><span class="by" style="left:226px">A2 00</span><span class="pk b" style="left:450px">ldx</span><span class="fg" style="left:490px">#$00</span></div>
<div class="r" style="top:1312px"><span class="n" style="left:10px">282</span><span class="pu" style="left:170px">$125A</span><span class="by" style="left:226px">BD 00 08</span><span class="cy b" style="left:322px">b125A</span><span class="pk b" style="left:450px">lda</span><span class="fg" style="left:490px">f0800,x</span><span class="co" style="left:610px">; x-ref: $126d</span></div>
<div class="r" style="top:1330px"><span class="n" style="left:10px">283</span><span class="pu" style="left:170px">$125D</span><span class="by" style="left:226px">9D 00 0A</span><span class="pk b" style="left:450px">sta</span><span class="fg" style="left:490px">f0A00,x</span></div>
<div class="r" style="top:1348px"><span class="n" style="left:10px">284</span><span class="pu" style="left:170px">$1260</span><span class="by" style="left:226px">9D 00 0C</span><span class="pk b" style="left:450px">sta</span><span class="fg" style="left:490px">f0C00,x</span></div>
<div class="r" style="top:1366px"><span class="n" style="left:10px">285</span><span class="pu" style="left:170px">$1263</span><span class="by" style="left:226px">BD 00 09</span><span class="pk b" style="left:450px">lda</span><span class="fg" style="left:490px">f0900,x</span></div>
<div class="r" style="top:106px"><span class="fg" style="left:1706px">Sprite  192 / $C0 @ $3000</span></div>
<div class="r" style="top:124px"><span class="dt" style="left:1722px">..............    ......</span></div>
<div class="r" style="top:142px"><span class="dt" style="left:1722px">............          ..</span></div>
<div class="r" style="top:160px"><span class="dt" style="left:1722px">..........            ..</span></div>
<div class="r" style="top:178px"><span class="dt" style="left:1722px">..........            ..</span></div>
<div class="r" style="top:196px"><span class="dt" style="left:1722px">..........            ..</span></div>
<div class="r" style="top:214px"><span class="dt" style="left:1722px">..........            ..</span></div>
<div class="r" style="top:232px"><span class="dt" style="left:1722px">..........          ....</span></div>
<div class="r" style="top:250px"><span class="dt" style="left:1722px">............        ....</span></div>
<div class="r" style="top:268px"><span class="dt" style="left:1722px">............        ....</span></div>
<div class="r" style="top:286px"><span class="dt" style="left:1722px">..........          ....</span></div>
<div class="r" style="top:304px"><span class="dt" style="left:1722px">..........            ..</span></div>
<div class="r" style="top:322px"><span class="dt" style="left:1722px">..........            ..</span></div>
<div class="r" style="top:340px"><span class="dt" style="left:1722px">..........            ..</span></div>
<div class="r" style="top:358px"><span class="dt" style="left:1722px">..........            ..</span></div>
<div class="r" style="top:376px"><span class="dt" style="left:1722px">............          ..</span></div>
<div class="r" style="top:394px"><span class="dt" style="left:1722px">..............    ......</span></div>
<div class="r" style="top:412px"><span class="dt" style="left:1722px">........................</span></div>
<div class="r" style="top:430px"><span class="dt" style="left:1722px">........................</span></div>
<div class="r" style="top:448px"><span class="dt" style="left:1722px">........................</span></div>
<div class="r" style="top:466px"><span class="dt" style="left:1722px">........................</span></div>
<div class="r" style="top:484px"><span class="dt" style="left:1722px">........................</span></div>
<div class="r" style="top:502px"><span class="fg" style="left:1706px">Sprite  193 / $C1 @ $3040</span></div>
<div class="r" style="top:520px"><span class="dt" style="left:1722px">..............    ......</span></div>
<div class="r" style="top:538px"><span class="dt" style="left:1722px">..........          ....</span></div>
<div class="r" style="top:556px"><span class="dt" style="left:1722px">..........            ..</span></div>
<div class="r" style="top:574px"><span class="dt" style="left:1722px">..........            ..</span></div>
<div class="r" style="top:592px"><span class="dt" style="left:1722px">..........            ..</span></div>
<div class="r" style="top:610px"><span class="dt" style="left:1722px">..........            ..</span></div>
<div class="r" style="top:628px"><span class="dt" style="left:1722px">............          ..</span></div>
<div class="r" style="top:646px"><span class="dt" style="left:1722px">............        ....</span></div>
<div class="r" style="top:664px"><span class="dt" style="left:1722px">............        ....</span></div>
<div class="r" style="top:682px"><span class="dt" style="left:1722px">............          ..</span></div>
<div class="r" style="top:700px"><span class="dt" style="left:1722px">..........            ..</span></div>
<div class="r" style="top:718px"><span class="dt" style="left:1722px">..........            ..</span></div>
<div class="r" style="top:736px"><span class="dt" style="left:1722px">..........            ..</span></div>
<div class="r" style="top:754px"><span class="dt" style="left:1722px">..........            ..</span></div>
<div class="r" style="top:772px"><span class="dt" style="left:1722px">..........          ....</span></div>
<div class="r" style="top:790px"><span class="dt" style="left:1722px">..............    ......</span></div>
<div class="r" style="top:808px"><span class="dt" style="left:1722px">........................</span></div>
<div class="r" style="top:826px"><span class="dt" style="left:1722px">........................</span></div>
<div class="r" style="top:844px"><span class="dt" style="left:1722px">........................</span></div>
<div class="r" style="top:862px"><span class="dt" style="left:1722px">........................</span></div>
<div class="r" style="top:880px"><span class="dt" style="left:1722px">........................</span></div>
<div class="r" style="top:898px"><span class="ye" style="left:1706px">Sprite  194 / $C2 @ $3080</span></div>
<div class="r" style="top:916px"><span class="dt" style="left:1722px">..............    ......</span></div>
<div class="r" style="top:934px"><span class="dt" style="left:1722px">..........            ..</span></div>
<div class="r" style="top:952px"><span class="dt" style="left:1722px">........</span></div>
<div class="r" style="top:970px"><span class="dt" style="left:1722px">........</span></div>
<div class="r" style="top:988px"><span class="dt" style="left:1722px">........</span></div>
<div class="r" style="top:1006px"><span class="dt" style="left:1722px">........</span></div>
<div class="r" style="top:1024px"><span class="dt" style="left:1722px">..........            ..</span></div>
<div class="r" style="top:1042px"><span class="dt" style="left:1722px">..........            ..</span></div>
<div class="r" style="top:1060px"><span class="dt" style="left:1722px">..........            ..</span></div>
<div class="r" style="top:1078px"><span class="dt" style="left:1722px">..........            ..</span></div>
<div class="r" style="top:1096px"><span class="dt" style="left:1722px">........</span></div>
<div class="r" style="top:1114px"><span class="dt" style="left:1722px">........</span></div>
<div class="r" style="top:1132px"><span class="dt" style="left:1722px">........</span></div>
<div class="r" style="top:1150px"><span class="dt" style="left:1722px">........</span></div>
<div class="r" style="top:1168px"><span class="dt" style="left:1722px">........</span></div>
<div class="r" style="top:1186px"><span class="dt" style="left:1722px">............        ....</span></div>
<div class="r" style="top:1204px"><span class="dt" style="left:1722px">........................</span></div>
<div class="r" style="top:1222px"><span class="dt" style="left:1722px">........................</span></div>
<div class="r" style="top:1240px"><span class="dt" style="left:1722px">........................</span></div>
<div class="r" style="top:1258px"><span class="dt" style="left:1722px">........................</span></div>
<div class="r" style="top:1276px"><span class="dt" style="left:1722px">........................</span></div>
<div class="r" style="top:1294px"><span class="fg" style="left:1706px">Sprite  195 / $C3 @ $30C0</span></div>
<div class="r" style="top:1312px"><span class="dt" style="left:1722px">..............    ......</span></div>
<div class="r" style="top:1330px"><span class="dt" style="left:1722px">........</span></div>
<div class="r" style="top:1348px"><span class="dt" style="left:1722px">........</span></div>
<div class="r" style="top:1366px"><span class="dt" style="left:1722px">........</span></div>
<div class="r" style="top:1402px"><span class="cy b" style="left:10px">Sprites View Shown</span><span class="cy" style="left:1114px">Commodore 64 | 64tass | Code: $1200-$1282 | Cursor: 1214 | Origin: 0801 | File: "burnin_rubber.regen2000proj"</span></div>
</div>
<div class="inner"></div>
</div>
</body></html>
